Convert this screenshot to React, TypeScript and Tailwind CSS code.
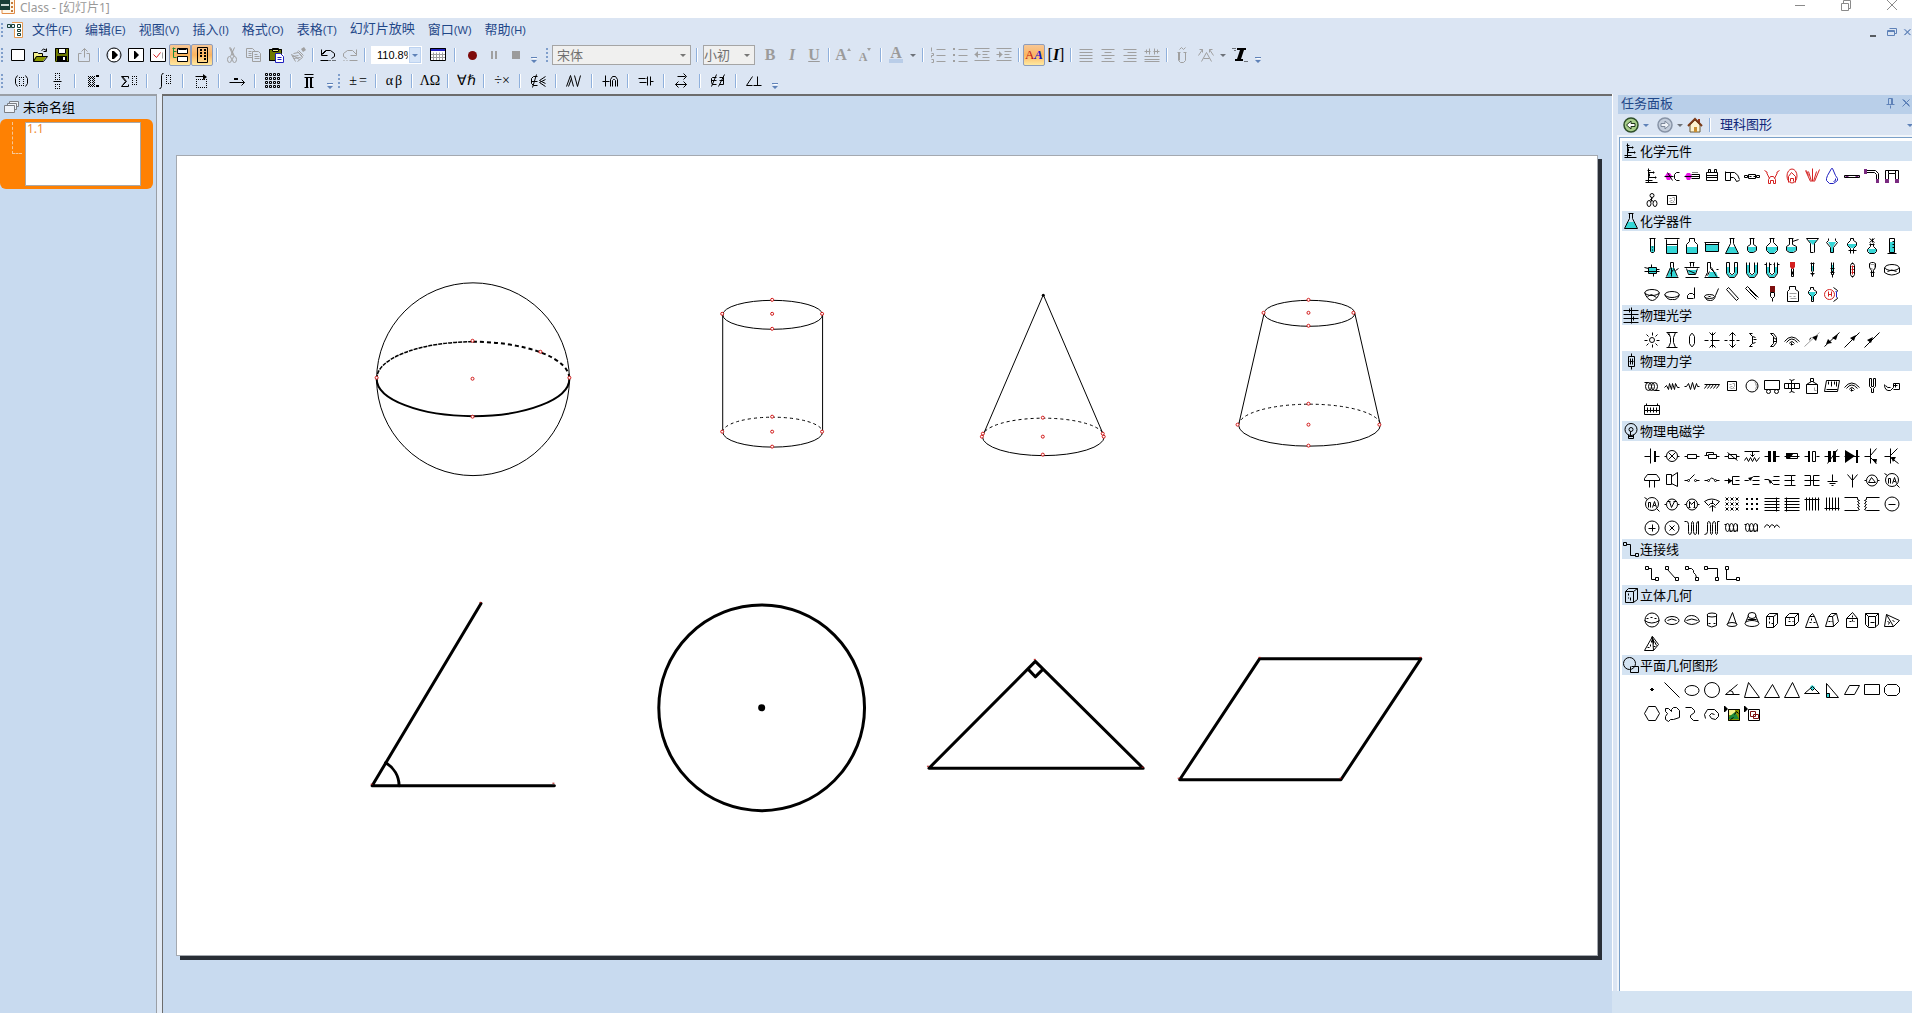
import React from "react";

/* ---------- icon drawing ---------- */

const COLORS: Record<string, string> = {
  k: "#000000",
  r: "#d42020",
  c: "#35d6d6",
  m: "#e815e8",
  b: "#2020c0",
  g: "#a0a0a0",
  w: "#ffffff",
  p: "#7a2a80",
  o: "#6e7a00",
  y: "#f4f08a",
  n: "#8a9700",
  d: "#7d0f0f",
  s: "#5f82b8",
  e: "#1d8a3a",
};

/** Circle or ellipse as path data. */
const o = (cx: number, cy: number, rx: number, ry: number = rx) =>
  `M${cx - rx} ${cy}a${rx} ${ry} 0 1 0 ${2 * rx} 0a${rx} ${ry} 0 1 0 ${-2 * rx} 0`;

/**
 * Draws layers separated by "|". The first letter of a layer picks the colour:
 * lower case strokes the path through pixel centres, upper case fills it.
 */
function Glyph({ art, size = "h-4 w-4", box = 16 }: { art: string; size?: string; box?: number }) {
  return (
    <svg viewBox={`0 0 ${box} ${box}`} className={`${size} shrink-0 overflow-visible`} aria-hidden="true">
      {art.split("|").map((layer, i) => {
        const code = layer[0];
        const color = COLORS[code.toLowerCase()];
        return code !== code.toLowerCase() ? (
          <path key={i} d={layer.slice(1)} fill={color} />
        ) : (
          <path key={i} d={layer.slice(1)} fill="none" stroke={color} transform="translate(.5 .5)" />
        );
      })}
    </svg>
  );
}

/* ---------- task pane data ---------- */

const stand = "kM4 0V14M1 14H13M1 12H8M4 4H10M4 9H12M5 5V8M9 3V5M11 8V10M3 2H6";
const erlen = "CM4 9H11L14 15H2Z|kM5 0H10M6 0V5L1 15H14L9 5V0";
const arcs = "kM0 9Q7 0 15 9M2 10Q7 3 13 10M5 11Q7 7 10 11M7 10V13M6 12H9";
const coil = `k${o(3, 7, 2, 4)}${o(7, 7, 2, 4)}${o(11, 7, 2, 4)}M5 10Q6 13 7 10M9 10Q10 13 11 10M13 4V11M0 4H2`;
const meter = (extra: string) => `k${o(7.5, 8, 5.5)}M0 8H2M13 8H15${extra}`;
const bigMeter = `k${o(7.5, 7.5, 6.5)}M0 1L3 3M12 12L15 15M4 11V6M4 6H6V11M8 11L10 5L12 11M9 9H11`;
const conn = "kM1 0H4V3H1ZM11 11H14V14H11Z";
const crosses = [1, 6, 11]
  .map((y) => [1, 6, 11].map((x) => `M${x} ${y}L${x + 3} ${y + 3}M${x + 3} ${y}L${x} ${y + 3}`).join(""))
  .join("");

type Group = { title: string; icon: string; items: string[] };

const groups: Group[] = [
  {
    title: "化学元件",
    icon: stand,
    items: [
      stand,
      "MM1 8L3 5H6L8 8L6 12H3Z|kM0 8H9M3 4L8 12|kM15 4H12L10 6V10L12 12H15",
      "MM1 8L3 5H6L8 8L6 12H3Z|kM0 8H15M7 6H15V10H7M8 4H9M10 4H11M12 4H13",
      "kM2 4H13V12H2ZM2 7H13M2 9H13M4 4V1H6V4M10 4V1H12V4",
      "kM1 3V12M1 12H6V4H1M6 4H10Q14 6 15 11M6 9H9Q11 10 12 13L15 12",
      "kM0 7H3V9H0ZM12 7H15V9H12ZM4 6H11V10H4ZM5 8H7M9 8H11",
      "rM0 2L3 4M15 2L12 4M2 4L5 10M13 4L10 10M4 15V11L6 8H9L11 11V15H9V12H6V15Z",
      `r${o(7.5, 7.5, 5, 7)}M4 14V8L7 4L11 8V14M6 13V10H9V13`,
      "rM1 2L6 13M4 3L7 13M8 0V13M12 3L9 13M15 1L10 13M2 2L4 7",
      "bM7 0L3 7L2 10V12L5 15H9L13 12V10L11 7L8 0ZM11 10V12L9 13",
      "kM0 7H15M0 9H15M0 7V9M15 7V9|pM1 8H4M11 8H14",
      "kM2 2H11L14 5V13M2 4H10L12 6V13|PM0 1H3V6H0ZM12 11H15V15H12Z",
      "kM1 13V2H14V13M4 13V5H11V13M4 2V5M11 2V5|PM1 11H5V15H1ZM11 11H15V15H11Z",
      `k${o(7.5, 3, 2)}${o(4.5, 11, 2, 3)}${o(10.5, 11, 2, 3)}M7 5V9M6 7L9 9M5 8L8 6`,
      "kM3 3H12V12H3Z|gM5 6H7M8 5H10V8L8 10H6M5 9H6M9 10H10M6 8H8",
    ],
  },
  {
    title: "化学器件",
    icon: erlen,
    items: [
      "CM7 8H10V14H7Z|kM5 0H11M6 0V13L7 14H9L10 13V0M8 8V9M8 11V12",
      "CM3 8H13V15H3Z|kM0 0H15M2 1V15H13V1M2 6H13",
      "CM3 9H13V15H3Z|kM5 0H10M5 0V3L2 6V15H13V6L10 3V0",
      "CM2 7H14V13H2Z|kM0 4H15M1 4V13H14V4M1 6H14",
      erlen,
      "CM4 9H12V12L10 14H5L4 12Z|kM5 0H10M6 0V6L3 8V12L5 14H9L12 12V8L9 6V0",
      "CM3 9H13V12L10 15H5L3 12Z|kM5 0H10M6 0V4L2 8V12L5 15H10L13 12V8L9 4V0",
      "CM3 9H12V12L9 14H5L3 12Z|kM4 0H9M5 0V6L2 8V12L5 14H9L12 12V8L8 6V0M8 3L14 1",
      "CM4 2H13L9 7Z|kM2 0H14M2 0L6 5V14M14 0L10 5V14M6 14H9",
      "CM4 4H12L9 9V14H7V9Z|kM4 0V2L2 4L6 9V14M11 0V2L13 4L9 9V14M6 14H9",
      "CM4 6H12V8L9 10H7L4 8Z|kM6 0H9V2L12 4V7L9 10V15M6 0V2L3 5V7L6 10V15M4 12H12",
      "CM4 11H13L11 15H5Z|kM5 0L10 4M10 0L5 4M8 0V4M6 5V8L3 11V13L5 15H10L12 13V11L9 8V5M5 6H10",
      "CM6 4H10V14H6Z|kM5 0H10M5 0V14H10V0M3 15H12M8 3H10M8 6H10M8 9H10",
      "CM4 6H13V11H4Z|kM0 5L4 6M0 9H15M4 5V11H12V5ZM7 2V5M9 11V14M12 7H15",
      "CM6 6H10L13 15H3Z|kM6 0V5L2 14M9 0V5L13 14M6 0H9M1 15H14M7 5V14M11 8L14 6M9 7L6 11",
      "CM3 8H13L10 13H6Z|kM5 0H10M6 0V4M9 0V4M0 5H15M2 6L4 12H11L13 6M1 15H14M4 8L11 11",
      "CM6 10H12L14 15H4Z|kM3 0H6V6L10 10M3 0V10L1 14M0 15H15M7 5L12 14M5 9L3 13M12 7H14",
      "CM3 5H5V11L7 13H9L11 11V5H13V12L10 15H6L3 12Z|kM2 0V11L5 15H10L13 11V0M5 0V10L7 12H8L10 10V0M2 0H5M10 0H13",
      "CM3 3H5V11L7 13H9L11 11V3H13V12L10 15H6L3 12Z|kM2 0V11L5 15H10L13 11V0M5 0V10L7 12H8L10 10V0",
      "CM3 5H5V11L7 13H9L11 11V5H13V12L10 15H6L3 12Z|kM2 0V11L5 15H10L13 11V0M5 0V10L7 12H8L10 10V0M0 2H2M5 2H7M9 2H10M13 2H15",
      "kM7 6V14H9V6M8 9V12|RM6 0H11V5L9 7H8L6 5Z",
      "CM7 4H10V9H7Z|kM7 0V9M9 0V9M6 1H10M8 9V14M6 11H10M7 12H9",
      "CM7 3H10V9H7Z|kM7 0V9M9 0V9M7 9H9V12H7ZM8 12V15M6 6H10M6 10H10",
      "rM7 4H10M7 7H10M7 10H10M8 3V12|kM8 0V1M7 1L6 3V12L7 14H9L10 12V3L9 1ZM8 14V15",
      "gM6 2H10V6L8 9M5 5L9 7|kM5 1L7 0H9L11 1V5L9 8V14H7V8L5 5ZM6 10H10",
      `k${o(7.5, 5, 7, 3)}M0 5V10Q7 15 15 10V5M3 9Q7 6 12 9`,
      `k${o(7.5, 6, 7, 3)}M0 6Q3 14 8 14Q13 13 15 6M3 10L7 8L12 11`,
      `k${o(7.5, 8, 7, 3)}M0 8Q3 14 8 13Q13 14 15 8`,
      "kM10 1V12M9 12H3V9L5 7H8L10 9",
      `k${o(5, 10, 5, 2)}M0 10Q2 15 6 14Q10 14 11 9L14 2M4 10H6`,
      "kM2 3L12 14M4 1L14 12M2 3L4 1M12 14L14 12",
      "kM1 2L12 13M3 0L14 11M1 2L3 0M5 3L12 10",
      "kM6 6H10V10L8 12L6 10ZM8 12V15|DM6 0H11V6H6Z",
      "kM5 0H11M5 0V3L3 5V15H14V5L11 3V0|gM5 7H12M5 10H7M9 10H11M6 12H12",
      "CM4 6H12L10 10V14H7V10Z|kM6 1H9V3L12 5V7L9 10V15H7V10L4 7V5L6 3Z",
      `r${o(5, 8, 5)}M4 5V10M7 5V10M4 8H7|kM9 1L13 4V5M13 11V12L9 15|bM11 5H12V11`,
    ],
  },
  {
    title: "物理光学",
    icon: "kM0 3H15M0 7H15M0 11H15M0 15H15M8 0V16M6 1V5M10 9V13",
    items: [
      `k${o(7.5, 7.5, 2.5)}M8 0V3M8 12V15M0 8H3M12 8H15M2 2L4 4M13 2L11 4M2 13L4 11M13 13L11 11`,
      "kM2 0H13M2 15H13M4 0L6 5V10L4 15M11 0L9 5V10L11 15M3 1L5 3",
      "kM7 1L5 4V11L7 14H8L10 11V4L8 1Z",
      "kM8 0V15M5 0L8 3L11 0M5 15L8 12L11 15M0 8H4M6 8H15",
      "kM8 0V15M5 3L8 0L11 3M5 12L8 15L11 12M0 8H3M5 8H10M12 8H15",
      "kM5 1L8 4V11L5 14M8 4L11 5M9 7H12M8 11L11 10M5 1H8M5 14H8",
      "kM6 1L9 4V11L6 14M6 1H9L12 5V10L9 14H6M9 5L12 7M9 9L12 9",
      arcs,
      "gM0 14L15 0|KM5 9L8 5L12 9L14 3L6 6Z",
      "kM0 14L15 0|KM8 6L14 2L12 8ZM2 12L4 7L8 11Z",
      "kM0 15L15 0|KM6 6L12 3L10 9Z",
      "kM0 15L15 0|KM3 8L9 5L7 11Z",
    ],
  },
  {
    title: "物理力学",
    icon: "kM8 0V3M8 13V16M5 3H11V13H5ZM7 5V11M9 5V11M6 8H10",
    items: [
      `kM0 4H4${o(4, 8, 3, 4)}${o(7, 8, 3, 4)}${o(10, 8, 3, 4)}M10 12H15`,
      "kM0 9L2 7L4 11L5 5L7 11L8 5L10 11L11 5L13 9H15",
      "kM0 8H2L4 5L6 11L8 4L10 11L12 5L13 8H15",
      "kM0 6H15M3 6L0 10M6 6L3 10M9 6L6 10M12 6L9 10M15 6L12 10",
      "kM3 3H12V12H3Z|gM5 6H7M8 5H10V8L8 10H6M5 9H6M9 10H10M6 8H8",
      `k${o(7.5, 7.5, 6)}|gM11 5L12 8L11 11M10 3L12 6`,
      `kM0 2H15V11H0Z${o(4, 13, 2)}${o(12, 13, 2)}`,
      "kM0 5H15V10H0ZM4 5V10M10 5V10M7 5V10M5 1Q7 3 10 1M7 2V5M7 10V13M5 14Q7 12 10 14",
      "kM2 6H13V15H2ZM7 3L2 6M8 3L13 6M6 0H9V3H6Z|gM10 9V12H12",
      "kM2 2H15L13 13H0ZM4 3V6M7 3V8M10 3V6M12 3V8M2 11H13",
      arcs,
      "kM5 0V8L7 10V14H9V10L11 8V0H9V8H7V0Z",
      "kM0 6Q0 13 6 12L9 9V5H15V11H9M11 5V9M9 7H13M1 7Q3 10 6 9",
      "kM0 3H15V12H0ZM2 3V1M13 3V1M0 8H15M3 5V10M6 5V10M9 5V10M12 5V10",
    ],
  },
  {
    title: "物理电磁学",
    icon: `k${o(7.5, 6, 6)}${o(7.5, 6, 2)}M5 11V15H10V11M7 8V12M5 13H10`,
    items: [
      "kM0 8H6M6 0V15M11 8H15|KM10 3H12V14H10Z",
      `k${o(7.5, 7.5, 5.5)}M4 4L11 11M11 4L4 11M0 8H2M13 8H15`,
      "kM0 8H3V6H12V10H3V8M12 8H15",
      "kM0 7H4M4 7V10H12V6H4V7M12 8H15M2 7V4H9V6",
      "kM0 8H4V6H12V10H4V8M12 8H15M3 4L13 12",
      "kM0 3H15M0 12L2 9L4 13L6 9L8 13L10 9L12 13L15 9M8 3V8M6 6L8 8L10 6",
      "kM0 8H5M11 8H15|KM4 3H7V14H4ZM9 3H12V14H9Z",
      "kM0 8H15M2 5H13V10H2Z|KM2 5H10L6 10H2Z",
      "kM0 8H5M12 8H15M8 3H11V13H8Z|KM4 3H6V14H4Z",
      "kM0 8H5M11 8H15M3 15L13 1|KM4 3H7V14H4ZM9 3H12V14H9Z",
      "kM0 8H15|KM1 2L11 8L1 15ZM12 2H14V15H12Z",
      "kM0 8H6M6 0V15M6 7L12 0M6 9L12 15|KM8 11L13 11L12 16Z",
      "kM0 8H6M6 0V15M6 7L13 0M6 9L14 15|KM7 9L12 9L9 14Z",
      "kM0 8V6L3 2H12L15 6V8ZM5 8V15M10 8V15",
      "kM2 2H7V12H2ZM7 4L13 0V14L7 11",
      `kM0 8H3M5 7L10 2M12 8H15${o(4, 8, 1)}${o(11, 8, 1)}`,
      `kM0 8H3M12 8H15${o(4, 8, 1)}${o(11, 8, 1)}M5 7Q7 4 10 7`,
      "kM0 8H8M8 4V12M8 4H15M8 12H15M11 8H15|KM4 6L8 9L4 12Z",
      "kM0 8H4M4 8L9 4H15M8 8H15M8 12H15|KM4 6L8 5L7 9Z",
      "kM0 7H4M4 7L9 12H15M9 4H15M8 8H15|KM4 7L8 9L6 12Z",
      "kM0 3H7V13H0M0 8H10M7 3H11M7 13H11",
      "kM0 3H6V13H0M0 8H15M9 3V13M9 3H15M9 13H15",
      "kM8 2V9M3 9H13M5 11H11M7 13H9",
      "kM8 15V2M3 2L8 8L13 2",
      meter("M7 5L4 10H11Z"),
      bigMeter,
      bigMeter,
      meter("M5 5L7 11L10 5M3 5H6M9 5H12"),
      meter("M5 11V5L7 8L10 5V11M4 11H6M9 11H11"),
      "kM0 5Q7 0 15 5L11 9L9 7H6L4 9ZM8 4V7M8 9V15M5 11L8 9L11 11",
      `k${crosses}`,
      "KM2 2H4V4H2ZM7 2H9V4H7ZM12 2H14V4H12ZM2 7H4V9H2ZM7 7H9V9H7ZM12 7H14V9H12ZM2 12H4V14H2ZM7 12H9V14H7ZM12 12H14V14H12Z",
      "kM0 2H15M0 5H15M0 8H15M0 11H15M0 14H15M12 1V15",
      "kM0 2H15M0 5H15M0 8H15M0 11H15M0 14H15M2 1V15",
      "kM2 1V14M5 1V14M8 1V14M11 1V14M14 1V14M0 3H15",
      "kM2 1V14M5 1V14M8 1V14M11 1V14M14 1V14M0 12H15",
      "kM0 1H13V3L15 4L13 5L15 7L13 8L15 10L13 11L15 13L13 14H0",
      "kM15 1H2V3L0 4L2 5L0 7L2 8L0 10L2 11L0 13L2 14H15",
      `k${o(7.5, 7.5, 7)}M4 8H11`,
      `k${o(7.5, 7.5, 7)}M4 8H11M8 4V11`,
      `k${o(7.5, 7.5, 7)}M5 5L10 10M10 5L5 10`,
      "kM0 1H2Q4 1 4 4V11Q4 14 5 14Q7 14 7 11V4Q7 1 8 1Q9 1 9 4V11Q9 14 11 14Q12 14 12 11V4Q12 1 14 1V14",
      "kM0 14Q3 14 3 11V4Q3 1 4 1Q6 1 6 4V11Q6 14 7 14Q8 14 8 11V4Q8 1 10 1Q11 1 11 4V11Q11 14 12 14Q13 14 13 11V1H15",
      coil,
      coil,
      "kM0 7Q2 2 5 6V7Q7 2 10 6V7Q12 2 15 7",
    ],
  },
  {
    title: "连接线",
    icon: "kM0 1H3V4H0ZM12 12H15V15H12ZM3 3H7V14H12",
    items: [
      conn + "M4 2H7V13H11",
      conn + "M3 3L11 12",
      conn + "M4 2H7L9 4V6L11 8L12 11",
      "kM0 0H3V3H0ZM11 11H14V14H11ZM3 2H13V11",
      "kM1 0H4V3H1ZM12 11H15V14H12ZM2 3V13H12",
    ],
  },
  {
    title: "立体几何",
    icon: "kM2 4H10V15H2ZM2 4L5 1H14L10 4M14 1V12L10 15M5 6V8M5 10V11M7 10V13",
    items: [
      `k${o(7.5, 7.5, 7)}M0 8Q7 13 15 8M2 6H4M6 5H8M10 6H12`,
      `k${o(7.5, 8, 7, 4)}M3 8Q7 5 12 8`,
      "kM0 9Q1 3 7 3Q13 3 15 9Q7 15 0 9ZM2 8Q7 5 13 8",
      `k${o(7.5, 2.5, 5, 2)}M3 3V13Q7 16 12 13V3M4 11H6M9 11H11`,
      `kM8 0L3 12M8 0L12 12${o(7.5, 12, 5, 2)}`,
      `k${o(7.5, 3, 4, 3)}M4 3L1 10M11 3L14 10M3 7H12${o(7.5, 11, 7, 3)}`,
      "kM2 4H9V15H2ZM2 4L5 1H13L9 4M13 1V11L9 15M5 5V7M5 9V11M7 11H9",
      "kM1 5H10V13H1ZM1 5L5 1H14L10 5M14 1V9L10 13M4 9H6M8 9H9M5 6V7",
      "kM5 4L1 15H14L10 4ZM5 4L8 1L10 4M5 10H7M9 10H11M7 6V8",
      "kM4 4L1 14H9L8 4ZM4 4L7 1H12L8 4M12 1L14 9L9 14M4 9H6M7 9H8",
      "kM2 6H13V15H2ZM2 6L8 0L13 6M8 3V5M5 9H7M9 9H10M8 7V9",
      "kM1 1H14V12L10 15H4L1 12ZM4 4H11V15M4 4V14M1 1L4 4M14 1L11 4M6 10H10",
      "kM2 2L0 14H9L15 8ZM2 2L9 14M3 9L5 10L4 12M8 8L10 9",
      "kM8 0L0 14H9L14 8ZM8 0L9 14M3 11H5M7 4V6M6 8V10M9 10H11M10 5L12 9|KM7 0L10 4V9L8 5Z",
    ],
  },
  {
    title: "平面几何图形",
    icon: `k${o(6, 6, 6)}M8 9H15V15H7V9`,
    items: [
      "KM7 6H9V9H7ZM6 7H10V8H6Z",
      "kM0 0L15 15",
      `k${o(7.5, 8, 7, 5)}`,
      `k${o(7.5, 7.5, 7.5)}`,
      "kM13 2L1 12H15M5 8Q9 8 9 12",
      "kM4 0L0 15H15Z",
      "kM8 2L0 15H15Z",
      "kM8 0L0 15H15Z",
      "CM6 5L8 3L11 5L8 9Z|kM8 4L0 11H15ZM6 6L8 8L10 6",
      "CM2 11H6V15H2Z|kM2 1V15H14ZM2 11H5V15",
      "kM5 3H15L10 12H0Z",
      "kM0 2H15V12H0Z",
      "kM3 2H12L15 5V10L12 13H3L0 10V5Z",
      "kM4 0H11L15 7L11 14H4L0 7Z",
      "kM1 2H4L7 5V3L9 1H12L15 4V11L9 13H6L4 15L1 13V10L3 7L1 5Z",
      "kM1 1H7L10 4V6L6 9V11L9 14H14",
      "kM1 12L0 8L3 3H10L14 7V10L11 13L7 12L5 9L7 7L10 8",
      "NM4 3H16V15H4Z|YM5 4H11V9H5Z|EM6 10L11 6L15 13H4Z|kM4 3H15V14H4ZM10 8L12 5L14 7M6 13L9 11|KM0 0H1L4 3L1 6H0Z",
      "dM6 5H11V10H6ZM9 8H14V12H9Z|kM4 3H15V14H4Z|KM0 0H1L4 3L1 6H0Z",
    ],
  },
];

/* ---------- toolbar pieces ---------- */

const Sep = ({ wide = false }: { wide?: boolean }) => (
  <span className={`${wide ? "w-3" : "w-2"} flex shrink-0 justify-center`} aria-hidden="true">
    <span className="h-3.5 w-px bg-[#8fb0dc]" />
    <span className="h-3.5 w-px bg-white" />
  </span>
);

const Grip = () => (
  <span className="flex w-[7px] shrink-0 flex-col items-center gap-0.5 pr-1" aria-hidden="true">
    <span className="h-0.5 w-0.5 bg-[#7f9ecb]" />
    <span className="h-0.5 w-0.5 bg-[#7f9ecb]" />
    <span className="h-0.5 w-0.5 bg-[#7f9ecb]" />
    <span className="h-0.5 w-0.5 bg-[#7f9ecb]" />
  </span>
);

const Overflow = () => (
  <button type="button" aria-label="更多按钮" className="flex h-5 w-3.5 shrink-0 items-end justify-center">
    <Glyph art="SM1 0H7V1H1ZM1 3H7L4 6Z|wM2 1H6" size="h-2 w-2" box={8} />
  </button>
);

const Arrow = ({ label, gray = false }: { label: string; gray?: boolean }) => (
  <button type="button" aria-label={label} className="flex h-5 w-3 shrink-0 items-center justify-center">
    <Glyph art={gray ? "KM1 3H7L4 6Z" : "SM1 3H7L4 6Z"} size={gray ? "h-2 w-2 opacity-50" : "h-2 w-2"} box={8} />
  </button>
);

function Tool({ label, active = false, children }: { label: string; active?: boolean; children: React.ReactNode }) {
  return (
    <button
      type="button"
      aria-label={label}
      title={label}
      className={`flex h-[22px] w-[22px] shrink-0 items-center justify-center ${
        active ? "rounded-xs border border-[#8e9dbb] bg-linear-to-b from-[#f7c795] via-[#fbb45f] to-[#fee9a0]" : ""
      }`}
    >
      {children}
    </button>
  );
}

const Serif = ({ className, children }: { className: string; children: React.ReactNode }) => (
  <span className={`font-['Liberation_Serif',serif] text-base leading-4 text-[#9b9b9b] ${className}`}>{children}</span>
);

const Wide = ({ label, children }: { label: string; children: React.ReactNode }) => (
  <button
    type="button"
    aria-label={label}
    title={label}
    className="flex h-[22px] w-7 shrink-0 items-center justify-center gap-0.5 whitespace-nowrap font-['Liberation_Serif',serif] text-sm leading-4 text-black"
  >
    {children}
  </button>
);

const dots = (points: [number, number][]) => points.map(([x, y]) => `M${x} ${y}h1v1h-1Z`).join("");

/** Dotted outline of an empty formula slot. */
const slot = (x: number, y: number, w: number, h: number) => {
  const pts: [number, number][] = [];
  for (let i = 0; i <= w; i += 2) pts.push([x + i, y], [x + i, y + h]);
  for (let j = 2; j < h; j += 2) pts.push([x, y + j], [x + w, y + j]);
  return dots(pts);
};

const mathLeft: [string, string][] = [
  ["括号", `kM4 2L2 5V10L4 13M12 2L14 5V10L12 13|K${slot(6, 4, 4, 8)}`],
  ["分数", `kM4 8H12|K${slot(6, 0, 4, 6)}${slot(6, 11, 4, 4)}`],
  ["上下标", `K${slot(3, 3, 6, 10)}${slot(4, 4, 4, 8)}${slot(5, 5, 2, 6)}M11 2H14V4H11ZM11 12H14V14H11Z`],
  ["求和", `kM7 5V3H0L4 8L0 13H7V11M1 3L5 8L1 12|K${slot(11, 3, 4, 8)}`],
  ["积分", `kM6 0H5L4 2V13L3 15H2|K${slot(9, 2, 4, 8)}`],
  ["上划线", `kM2 3H12|KM10 1L14 4L10 7Z${slot(3, 6, 10, 8)}`],
  ["箭头", "kM0 9H15M12 6L15 9L12 12|KM5 5H9V7H5Z"],
  ["矩阵", "kM0 0H2V2H0ZM4 0H6V2H4ZM8 0H10V2H8ZM12 0H14V2H12ZM0 4H2V6H0ZM4 4H6V6H4ZM8 4H10V6H8ZM12 4H14V6H12ZM0 8H2V10H0ZM4 8H6V10H4ZM8 8H10V10H8ZM12 8H14V10H12ZM0 12H2V14H0ZM4 12H6V14H4ZM8 12H10V14H8ZM12 12H14V14H12Z"],
  ["连乘", "kM3 1H12M3 4H12M3 14H7M9 14H12|KM5 4H7V15H5ZM9 4H11V15H9Z"],
];

const mathRight: [string, React.ReactNode][] = [
  ["关系符号", <><span>±</span><span>=</span></>],
  ["小写希腊字母", <><span>α</span><span>β</span></>],
  ["大写希腊字母", <span>ΛΩ</span>],
  ["逻辑符号", <span>∀ℏ</span>],
  ["运算符号", <span>÷×</span>],
  ["集合符号", <Glyph art="kM7 3H3L1 5V10L3 12H7M1 8H7M2 14L6 1M15 3L9 7L15 10M15 6L9 9L15 13" />],
  ["大型运算符", <Glyph art="kM0 13L4 2L7 13M8 2L11 13L14 2M2 13L5 5" />],
  ["集合运算", <Glyph art="kM0 8H7M3 2V13M8 13V6L10 3H13L15 6V13M10 13V7L11 6H12L13 7V13" />],
  ["等价符号", <Glyph art="kM0 5H7M1 9H8M9 3V12M12 3V12M12 8H15M8 5H9" />],
  ["双向箭头", <Glyph art="kM3 3H11M9 0L12 3L9 6M1 11H12M4 8L1 11L4 14M9 8L12 11L9 14" />],
  ["存在符号", <Glyph art="kM6 4H2L1 5V9L2 11H6M1 7H6M1 13L6 1M9 4H13V11H9M9 7H13M8 13L14 1" />],
  ["几何符号", <Glyph art="kM6 3L0 12H6M11 3V12M7 12H15" />],
];

const menus: [string, string][] = [
  ["文件", "(F)"],
  ["编辑", "(E)"],
  ["视图", "(V)"],
  ["插入", "(I)"],
  ["格式", "(O)"],
  ["表格", "(T)"],
  ["幻灯片放映", ""],
  ["窗口", "(W)"],
  ["帮助", "(H)"],
];

/* ---------- header bars ---------- */

function TitleBar() {
  return (
    <header className="flex h-[18px] shrink-0 items-start bg-white">
      <svg viewBox="0 0 16 14" className="mr-1 h-3.5 w-4" aria-hidden="true">
        <path d="M4 -1H14.500V13.500H2V9" fill="#fff8ec" stroke="#e08a45" />
        <path d="M0 0H10V10H0Z" fill="#173f36" />
        <path d="M1 4H9V6H1Z" fill="#c9d8d2" />
        <path d="M11 2H13V4H11ZM11 6H13V8H11ZM11 10H13V12H11Z" fill="#c47a3a" />
      </svg>
      <h1 className="text-[12px] leading-4 text-[#999999]">Class - [幻灯片1]</h1>
      <div className="ml-auto flex gap-6 pr-2 text-[#8a8a8a]">
        <button type="button" aria-label="最小化" className="flex h-3 w-6 items-center justify-center">
          <svg viewBox="0 0 12 12" className="h-3 w-3"><path d="M1 5.500H11" stroke="currentColor" /></svg>
        </button>
        <button type="button" aria-label="还原" className="flex h-3 w-5 items-center justify-center">
          <svg viewBox="0 0 12 12" className="h-3 w-3" fill="none" stroke="currentColor"><path d="M1.500 3.500H8.500V10.500H1.500ZM3.500 3.500V.5H10.500V8.500H8.500" /></svg>
        </button>
        <button type="button" aria-label="关闭" className="flex h-3 w-6 items-center justify-center">
          <svg viewBox="0 0 12 12" className="h-3 w-3"><path d="M1 0L11 10M11 0L1 10" stroke="currentColor" /></svg>
        </button>
      </div>
    </header>
  );
}

function MenuBar() {
  return (
    <nav aria-label="菜单" className="flex h-6 shrink-0 items-center">
      <Grip />
      <svg viewBox="0 0 18 16" className="mr-[7px] h-4 w-[18px]" aria-hidden="true">
        <path d="M5 .5H15.500V15.500H7.500V7" fill="#fff" stroke="#e59a52" />
        <path d="M.5 2.500H3.500V5.500H.5ZM4.500 2.500H7.500V5.500H4.500ZM10.500 2.500H13.500V5.500H10.500ZM10.500 7.500H13.500V9.500H10.500ZM10.500 11.500H13.500V13.500H10.500Z" fill="none" stroke="#173f36" />
      </svg>
      <ul className="flex gap-[13px] pb-0.5 text-[13px] leading-5 text-[#1f4788]">
        {menus.map(([name, key]) => (
          <li key={name}>
            <button type="button" className="flex items-center whitespace-nowrap">
              {name}
              <span className="pt-0.5 font-['Liberation_Sans',sans-serif] text-[11px]">{key}</span>
            </button>
          </li>
        ))}
      </ul>
      <div className="ml-auto flex items-center gap-1 pt-1.5">
        <button type="button" aria-label="最小化文档"><Glyph art="KM0 8H6V10H0Z" size="h-3 w-3 opacity-60" box={12} /></button>
        <button type="button" aria-label="还原文档"><Glyph art="sM3 1H10V6H8M1 3H8V8H1ZM1 4H8" size="h-3 w-3" box={12} /></button>
        <button type="button" aria-label="关闭文档"><Glyph art="sM2 1L9 8M9 1L2 8M3 1L10 8M10 1L3 8" size="h-3 w-2.5" box={12} /></button>
      </div>
    </nav>
  );
}

function StandardBar() {
  return (
    <div role="toolbar" aria-label="常用和格式" className="flex h-[26px] shrink-0 items-center">
      <Grip />
      <Tool label="新建"><Glyph art="WM1 2H15V14H1Z|kM1 2H14V13H1Z" /></Tool>
      <Tool label="打开"><Glyph art="YM1 5H5L6 7H10V9H4L1 13Z|NM4 9H15L11 14H1Z|kM1 14V5H5L6 6H10V9M1 14L4 9H15L11 14ZM9 3Q11 0 14 3M14 1V4H11" /></Tool>
      <Tool label="保存"><Glyph art="OM1 1H15V15H1Z|WM4 1H12V7H4Z|KM3 9H13V15H3Z|WM9 10H11V13H9Z|kM1 1H14V14H2L1 13ZM4 1V6H11V1" /></Tool>
      <Tool label="共享"><Glyph art="gM5 6H2V14H13V6H10M8 1V10M5 4L8 1L11 4" /></Tool>
      <Sep />
      <Tool label="播放"><Glyph art={`WM3 2H13V14H3Z|k${o(7.5, 7.5, 7)}|KM6 4H8L12 8L8 12H6Z`} /></Tool>
      <Tool label="从当前播放"><Glyph art="WM0 1H16V15H0Z|kM0 1H15V14H0Z|KM6 4H7L11 8L7 12H6Z" /></Tool>
      <Tool label="检查"><Glyph art="WM0 1H16V15H0Z|kM0 1H15V14H0Z|rM3 7L6 10L10 5|gM12 5V11" /></Tool>
      <Tool label="大纲" active><Glyph art="WM5 1H15V6H5ZM5 9H15V14H5Z|eM1 0V10M0 1H3M1 4H4M1 10H4|kM5 1H15V6H5ZM5 9H15V14H5ZM6 2H14" /></Tool>
      <Tool label="任务面板" active><Glyph art="kM3 0H13V15H3Z|KM6 2H8V4H6ZM10 2H12V4H10ZM6 5H8V7H6ZM10 5H12V7H10ZM6 8H8V10H6ZM10 8H12V10H10ZM10 11H12V13H10Z" /></Tool>
      <Sep />
      <Tool label="剪切"><Glyph art={`gM5 0L9 9M10 0L6 9M6 0L10 9${o(5, 12, 2, 3)}${o(10, 12, 2, 3)}`} /></Tool>
      <Tool label="复制"><Glyph art="gM6 10H0V1H6L8 3V4M2 4H5M2 6H5M2 8H5M6 4H12L14 6V14H6ZM8 7H11M8 9H13M8 11H13" /></Tool>
      <Tool label="粘贴"><Glyph art="OM1 2H14V14H1Z|YM4 1H11V5H4Z|WM7 7H16V16H7Z|kM13 6V2H1V13H7M4 1H10V4H4Z|bM7 6H12L15 9V15H7ZM9 10H13M9 12H13" /></Tool>
      <Tool label="格式刷"><Glyph art="GM11 2L14 0L16 3L13 5Z|gM8 3L13 8M7 4L12 9M1 7L9 12M3 6L8 5L12 10L7 14M1 7L5 14M2 9L8 8M3 11L10 10" /></Tool>
      <Sep />
      <Tool label="撤销"><Glyph art="kM1 2V8H7M1 7L5 3H10L14 6V9L11 11M2 7L6 3M0 13H8|kM9 13H10M12 13H13M14 13H15" /></Tool>
      <Tool label="重做"><Glyph art="gM14 2V8H8M14 7L10 3H5L1 6V9L4 11M7 13H15M1 13H2M4 13H5" /></Tool>
      <Sep />
      <div className="mx-0.5 flex h-[18px] w-[51px] shrink-0 bg-white">
        <input aria-label="显示比例" defaultValue="110.8%" className="w-[37px] min-w-0 bg-white pl-1.5 font-['Liberation_Sans',sans-serif] text-[11px] text-black outline-none" />
        <button type="button" aria-label="选择显示比例" className="m-px flex flex-1 items-center justify-center border border-[#bcd2f0] bg-[#d5e4f8]">
          <Glyph art="SM1 3H7L4 6Z" size="h-2 w-2" box={8} />
        </button>
      </div>
      <span className="w-[3px]" />
      <Tool label="插入表格"><Glyph art="WM0 2H16V14H0Z|gM3 5V13M6 5V13M9 5V13M12 5V13M0 7H15M0 10H15|BM0 1H16V4H0Z|kM0 1H15V13H0Z" /></Tool>
      <Sep wide />
      <Tool label="录制"><span className="h-[9px] w-[9px] rounded-full bg-[#7e0a0a]" /></Tool>
      <Tool label="暂停"><Glyph art="GM5 4H7V12H5ZM9 4H11V12H9Z" /></Tool>
      <Tool label="停止"><span className="h-2 w-2 bg-[#9b9b9b]" /></Tool>
      <Overflow />
      <span className="w-1" />
      <Grip />
      <div className="relative shrink-0">
        <select aria-label="字体" className="block h-5 w-[139px] appearance-none border border-[#a5a5a5] bg-[#f0f0ef] pl-1 text-[13px] leading-4 text-[#707070] outline-none">
          <option>宋体</option>
        </select>
        <span className="pointer-events-none absolute inset-y-0 right-1 flex items-center opacity-50"><Glyph art="KM1 3H7L4 6Z" size="h-2 w-2" box={8} /></span>
      </div>
      <Sep wide />
      <div className="relative shrink-0">
        <select aria-label="字号" className="block h-5 w-[52px] appearance-none border border-[#a5a5a5] bg-[#f0f0ef] text-[13px] leading-4 text-[#707070] outline-none">
          <option>小初</option>
        </select>
        <span className="pointer-events-none absolute inset-y-0 right-1 flex items-center opacity-50"><Glyph art="KM1 3H7L4 6Z" size="h-2 w-2" box={8} /></span>
      </div>
      <span className="w-1" />
      <Tool label="加粗"><Serif className="font-bold">B</Serif></Tool>
      <Tool label="倾斜"><Serif className="font-bold italic">I</Serif></Tool>
      <Tool label="下划线"><Serif className="font-bold underline">U</Serif></Tool>
      <Sep />
      <Tool label="增大字号"><Serif className="font-bold">A</Serif><Glyph art="GM0 3L2 0L4 3Z" size="h-2 w-1.5 mb-2" box={6} /></Tool>
      <Tool label="减小字号"><Serif className="pt-1 text-xs! font-bold">A</Serif><Glyph art="GM0 0L2 3L4 0Z" size="h-2 w-1.5 mb-2" box={6} /></Tool>
      <Sep />
      <Tool label="字体颜色"><span className="flex flex-col items-center"><Serif className="leading-3! font-bold">A</Serif><span className="h-1 w-3.5 bg-[#b9cde8]" /></span></Tool>
      <Arrow label="选择字体颜色" gray />
      <Sep />
      <Tool label="编号"><Glyph art="gM1 0V4M1 6H3V8H1V10M1 12H3V15H1M6 2H15M6 8H15M6 14H15" /></Tool>
      <Tool label="项目符号"><Glyph art="GM1 1H3V3H1ZM1 7H3V9H1ZM1 13H3V15H1Z|gM6 2H15M6 8H15M6 14H15" /></Tool>
      <Tool label="减少缩进"><Glyph art="gM0 1H15M8 4H15M8 7H13M8 10H15M0 13H15M0 7H6M3 4V10M1 6V8M2 5V9" /></Tool>
      <Tool label="增加缩进"><Glyph art="gM0 1H15M8 4H15M8 7H13M8 10H15M0 13H15M0 7H6M3 4V10M5 6V8M4 5V9" /></Tool>
      <Sep />
      <Tool label="文本模式" active>
        <span className="font-['Liberation_Serif',serif] text-[13px] leading-4 text-[#c01515]">A</span>
        <span className="font-['Liberation_Serif',serif] text-[13px] leading-4 font-bold text-[#1010c8] italic">A</span>
      </Tool>
      <Tool label="公式模式"><span className="flex font-['Liberation_Serif',serif] text-base leading-4 text-black">[<b className="italic">I</b>]</span></Tool>
      <Sep />
      <Tool label="两端对齐"><Glyph art="gM1 2H14M1 5H14M1 8H14M1 11H14M1 14H14" /></Tool>
      <Tool label="居中"><Glyph art="gM1 2H14M4 5H11M1 8H14M4 11H11M1 14H14" /></Tool>
      <Tool label="右对齐"><Glyph art="gM1 2H14M5 5H14M1 8H14M5 11H14M1 14H14" /></Tool>
      <Tool label="分散对齐"><Glyph art="gM0 9H15M0 14H15M0 12H15M0 4H6M9 4H15M2 2V6M13 2V6M5 1V7M10 1V7" /></Tool>
      <Sep />
      <Tool label="拼音"><Glyph art="gM3 5H6M9 5H12M4 5V13L6 15H9L11 13V5M5 5V13M5 2L7 0L9 2L11 0" /></Tool>
      <span className="w-0.5" />
      <Tool label="字符旋转"><Glyph art="gM8 5L3 14M8 5L13 14M5 11H11M0 8L4 2M4 2H1M4 2V5M15 8L11 2M11 2H14M11 2V5" /></Tool>
      <Arrow label="选择字符旋转" gray />
      <Tool label="清除格式"><Glyph art="KM5 1H14V3H12L9 12H11V14H3V12H5L8 3H5Z|kM0 1H1M2 1H3M2 3H3M12 14H13M14 14H15" /></Tool>
      <Overflow />
    </div>
  );
}

function MathBar() {
  return (
    <div role="toolbar" aria-label="公式" className="flex h-[26px] shrink-0 items-center">
      <Grip />
      {mathLeft.map(([label, art], i) => (
        <React.Fragment key={label}>
          {i > 0 && <Sep />}
          <Wide label={label}><Glyph art={art} /></Wide>
        </React.Fragment>
      ))}
      <Overflow />
      <Grip />
      {mathRight.map(([label, body], i) => (
        <React.Fragment key={label}>
          {i > 0 && <Sep />}
          <Wide label={label}>{body}</Wide>
        </React.Fragment>
      ))}
      <Overflow />
    </div>
  );
}

/* ---------- body panes ---------- */

function SlideList() {
  return (
    <aside aria-label="幻灯片" className="w-[157px] shrink-0 border-t-2 border-r border-[#9a9fa6] bg-[#c8daef]">
      <h2 className="flex h-[23px] items-center gap-[3px] pb-0.5 pl-1 text-[13px] leading-5 text-black">
        <svg viewBox="0 0 16 14" className="h-3.5 w-4" fill="#eef3fa" stroke="#7b7f86" aria-hidden="true">
          <path d="M5.500 1.500H14.500V6.500H5.500Z" />
          <path d="M3.500 3.500H12.500V9.500H3.500Z" />
          <path d="M.5 5.500H10.500V12.500H.5Z" />
        </svg>
        未命名组
      </h2>
      <button type="button" aria-label="幻灯片 1.1" className="mr-[3px] flex h-[70px] w-[153px] rounded-md bg-[#fe8103] py-[3px] pr-3">
        <span className="ml-3 h-8 w-2.5 shrink-0 border-b border-l border-dashed border-[#f5c89a]" />
        <span className="ml-[3px] block h-full flex-1 border border-[#a8a8a8] bg-white pl-px text-left text-[12px] leading-3 text-[#ef8b33]">1.1</span>
      </button>
    </aside>
  );
}

const handles: [number, number][] = [
  [472, 341], [540, 352], [376, 378], [472, 379], [569, 378], [472, 417],
  [772, 300], [722, 314], [772, 314], [822, 314], [772, 329], [772, 417], [722, 432], [772, 432], [822, 432], [772, 447],
  [1043, 418], [983, 434], [982, 437], [1043, 437], [1103, 434], [1104, 437], [1043, 455],
  [1309, 300], [1264, 313], [1309, 313], [1354, 313], [1309, 326], [1309, 404], [1238, 425], [1309, 425], [1380, 425], [1309, 446],
];

const corners: [number, number][] = [
  [371, 786], [480, 604], [553, 785], [1035, 661], [928, 768], [1143, 769], [1260, 659], [1421, 659], [1341, 780], [1179, 780],
];

function Slide() {
  return (
    <main className="flex min-w-0 flex-1 border-t-2 border-l border-[#6c6c6c] bg-[#c8daef] pt-[59px] pr-3.5 pb-[57px] pl-[13px]">
      <div className="min-w-0 flex-1 border border-[#a4a9b0] bg-white shadow-[4px_4px_0_#292e36]">
        <svg viewBox="177 156 1420 800" className="h-full w-full" role="img" aria-label="立体几何与平面几何图形">
          <g fill="none" stroke="#000">
            <circle cx="472.500" cy="379.500" r="96.500" />
            <path d="M376 379A96.500 37 0 0 1 472.500 342" strokeDasharray="4 1" strokeWidth="1.500" />
            <path d="M472.500 342A96.500 37 0 0 1 569 379" strokeDasharray="4 3" strokeWidth="2" />
            <path d="M376 379A96.500 37.500 0 0 0 569 379" strokeWidth="2" />

            <ellipse cx="772.500" cy="315" rx="50" ry="14.500" />
            <path d="M722.500 315V432.500A50 15 0 0 0 822.500 432.500V315" />
            <path d="M722.500 432.500A50 15 0 0 1 822.500 432.500" strokeDasharray="3 3" />

            <path d="M982.500 437L1043.500 295L1104.500 437A61 19 0 0 1 982.500 437" />
            <path d="M982.500 437A61 18.500 0 0 1 1104.500 437" strokeDasharray="3 3" />

            <ellipse cx="1310" cy="313.500" rx="45.500" ry="13" />
            <path d="M1264.500 314L1239 425.500A71 21 0 0 0 1381 425.500L1355.500 314" />
            <path d="M1239 425.500A71 21 0 0 1 1381 425.500" strokeDasharray="3 3" />
          </g>
          <circle cx="1043.500" cy="295.500" r="1.500" />
          <g fill="none" stroke="#000" strokeWidth="3" strokeLinecap="round" strokeLinejoin="round">
            <path d="M480.500 604L371.500 786.500H554" />
            <path d="M385 763.500A27 27 0 0 1 398.500 786.500" />
            <circle cx="761.500" cy="708.500" r="103" />
            <path d="M1035.500 662L929 769H1143.500ZM1028.500 670L1035.500 677.500L1043 670" />
            <path d="M1260 659.500H1421.500L1341.500 780.500H1180Z" />
          </g>
          <circle cx="761.500" cy="708.500" r="3.500" />
          <g fill="none" stroke="#b01414">
            {corners.map(([x, y]) => (
              <path key={`${x}-${y}`} d={`M${x - 1} ${y - 1}h2`} />
            ))}
          </g>
          <g fill="#fff" stroke="#d01616">
            {handles.map(([x, y]) => (
              <circle key={`${x}-${y}`} cx={x} cy={y} r="1.500" />
            ))}
          </g>
        </svg>
      </div>
    </main>
  );
}

function ShapeGroup({ title, icon, items }: Group) {
  return (
    <section>
      <h3 className="flex h-5 items-center gap-px bg-[#d4e3f2] pl-px text-[13px] leading-5 text-black">
        <Glyph art={icon} />
        {title}
      </h3>
      <ul className="flex flex-wrap pt-0.5 pl-5">
        {items.map((art, i) => (
          <li key={i}>
            <button type="button" aria-label={`${title} ${i + 1}`} className="flex h-6 w-5 items-center justify-center pt-0.5">
              <Glyph art={art} />
            </button>
          </li>
        ))}
      </ul>
    </section>
  );
}

const Round = ({ green }: { green: boolean }) => (
  <svg viewBox="0 0 16 16" className="h-4 w-4" aria-hidden="true">
    <circle cx="8" cy="8" r="7" fill={green ? "#a9cf8b" : "#c3cddb"} stroke={green ? "#2f4f2a" : "#8793a6"} strokeWidth="1.500" />
    <path
      d={green ? "M3.500 8L8 4V6.500H12V9.500H8V12Z" : "M12.500 8L8 4V6.500H4V9.500H8V12Z"}
      fill={green ? "#fff" : "#eef2f7"}
      stroke={green ? "#1d3318" : "#7b8799"}
    />
  </svg>
);

function TaskPane() {
  return (
    <aside aria-label="任务面板" className="flex w-[300px] shrink-0 flex-col border-l border-white bg-[#dbe5f3] pt-px pl-[5px]">
      <header className="flex h-[19px] shrink-0 items-center bg-[#b9cfe9] pb-[3px] pl-[3px] text-[13px] text-[#1f4788]">
        <h2 className="leading-4">任务面板</h2>
        <div className="ml-auto flex items-center gap-1">
          <button type="button" aria-label="固定"><Glyph art="sM4 1H8V7H4ZM7 1V7M2 7H10M6 8V11" size="h-3 w-3" box={12} /></button>
          <button type="button" aria-label="关闭面板"><Glyph art="sM2 2L9 9M9 2L2 9M3 2L9 8" size="h-3 w-3" box={12} /></button>
        </div>
      </header>
      <div className="flex h-[23px] shrink-0 items-center pb-0.5 pl-1">
        <button type="button" aria-label="后退" className="mx-px"><Round green /></button>
        <Arrow label="后退历史" />
        <span className="w-1" />
        <button type="button" aria-label="前进" className="mx-px"><Round green={false} /></button>
        <Arrow label="前进历史" gray />
        <button type="button" aria-label="主页" className="mx-px">
          <svg viewBox="0 0 16 16" className="h-4 w-4" aria-hidden="true">
            <path d="M3 8L8 3L13 8V15H3Z" fill="#fdf3d0" stroke="#6b5a3a" />
            <path d="M11 2H13V6H11Z" fill="#9b3b22" />
            <path d="M1 9L8 2L15 9" fill="none" stroke="#7a3a16" strokeWidth="2" />
            <path d="M7 10H10V15H7Z" fill="#c98d2f" />
          </svg>
        </button>
        <Sep wide />
        <span className="pb-px pl-1 text-[13px] leading-4 text-[#10287a]">理科图形</span>
        <span className="ml-auto" />
        <span className="-mr-1"><Arrow label="选择面板" /></span>
      </div>
      <div className="ml-px min-h-0 flex-1 overflow-hidden border-t border-l border-[#7aa0c8] bg-white pt-[3px] pl-0.5 outline-2 outline-white/60">
        {groups.map((g) => (
          <ShapeGroup key={g.title} {...g} />
        ))}
      </div>
      <footer className="-ml-1.5 h-[22px] shrink-0 bg-[#d4e3f2]" />
    </aside>
  );
}

export default function App() {
  return (
    <div className="flex h-screen flex-col overflow-hidden bg-[#dbe5f3] font-['Noto_Sans','Noto_Sans_CJK_SC',sans-serif]">
      <TitleBar />
      <MenuBar />
      <StandardBar />
      <MathBar />
      <div className="flex min-h-0 flex-1">
        <SlideList />
        <div className="w-[5px] shrink-0 bg-[#e3ebf6]" />
        <Slide />
        <TaskPane />
      </div>
    </div>
  );
}
